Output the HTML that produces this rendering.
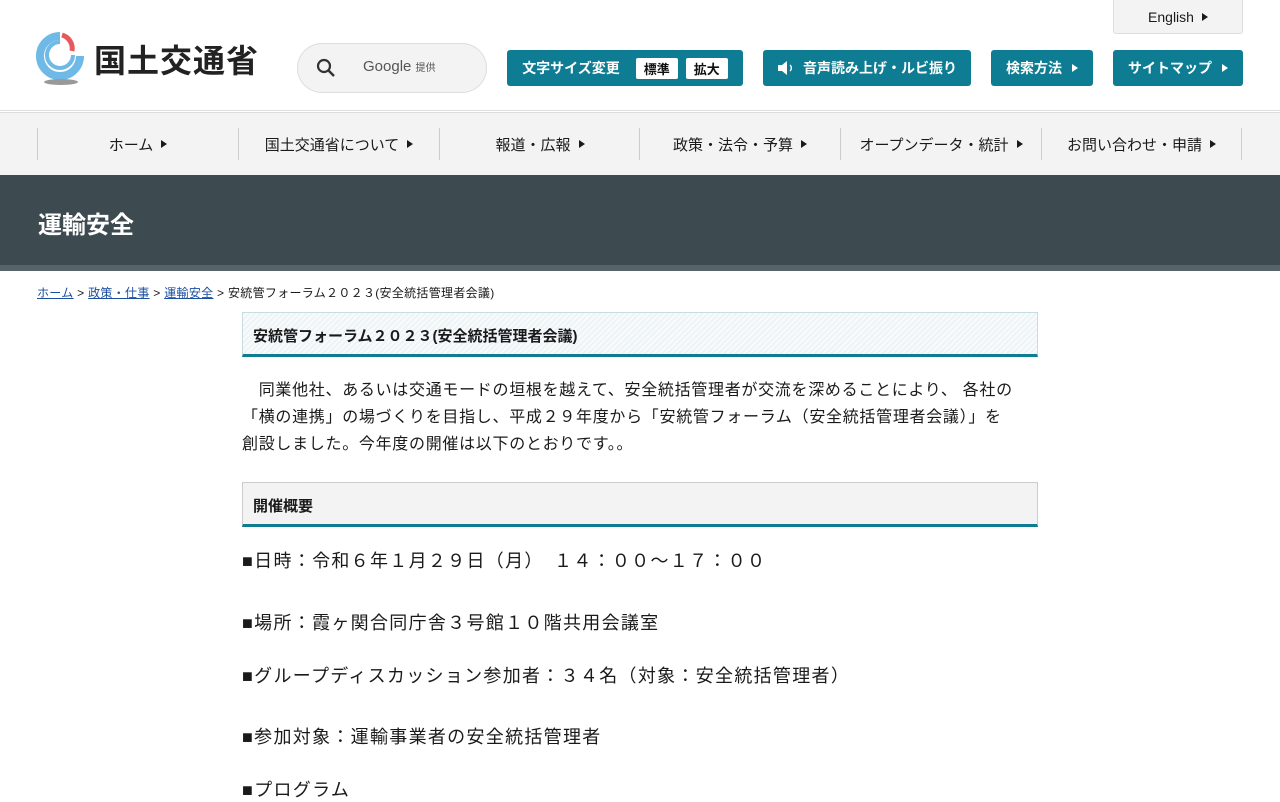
<!DOCTYPE html>
<html><head><meta charset="utf-8"><style>
*{margin:0;padding:0;box-sizing:border-box}
body{width:1280px;height:800px;overflow:hidden;background:#fff;font-family:"Liberation Sans","Noto Sans CJK JP",sans-serif;color:#1a1a1a}
.abs{position:absolute}
.btn{position:absolute;top:50px;height:36px;background:#0e7d93;color:#fff;border-radius:3px;font-size:14px;font-weight:bold;display:flex;align-items:center;justify-content:center}
.tri{display:inline-block;width:0;height:0;border-left:6px solid currentColor;border-top:4.5px solid transparent;border-bottom:4.5px solid transparent;margin-left:10px}
.wb{background:#fff;color:#111;border-radius:2px;padding:1px 8px;font-size:13px;margin-left:8px}
.nav{position:absolute;top:112px;left:0;width:1280px;height:63px;background:#f3f3f3;border-top:1px solid #ddd}
.nav div{position:absolute;top:15px;height:32px;width:201px;border-left:1px solid #ccc;font-size:15px;display:flex;align-items:center;justify-content:center}
.nav .tri{border-left-width:6px;margin-left:8px}
.h2{position:absolute;left:242px;width:796px;height:45px;border:1px solid #c8dde2;border-bottom:3px solid #0e7d93;background:repeating-linear-gradient(135deg,#eef4f6 0 2px,#f8fbfc 2px 4px);font-size:15px;font-weight:bold;padding:12px 10px}
.p{position:absolute;left:242px;font-size:18px;letter-spacing:1.3px}
</style></head><body>
<svg class="abs" style="left:36px;top:32px" width="50" height="54" viewBox="0 0 50 54">
<path d="M24 4 A20 20 0 1 0 44 24" fill="none" stroke="#6fb9e6" stroke-width="8"/>
<path d="M24 10 A13 13 0 1 0 37 23" fill="none" stroke="#6fb9e6" stroke-width="4"/>
<path d="M26 3 A14 14 0 0 1 36 19" fill="none" stroke="#e65a5f" stroke-width="5"/>
<ellipse cx="25" cy="50" rx="17" ry="3" fill="#999"/></svg>
<div class="abs" style="left:94px;top:36px;font-size:32px;font-weight:bold;color:#222;letter-spacing:1px">国土交通省</div>
<div class="abs" style="left:297px;top:43px;width:190px;height:50px;border:1px solid #ddd;border-radius:25px;background:#f3f3f3"></div>
<svg class="abs" style="left:316px;top:58px" width="20" height="20"><circle cx="8" cy="8" r="6" fill="none" stroke="#333" stroke-width="2.2"/><line x1="12.5" y1="12.5" x2="18" y2="18" stroke="#333" stroke-width="2.5"/></svg>
<div class="abs" style="left:363px;top:58px;font-size:15px;color:#555">Google <span style="font-size:10px">提供</span></div>
<div class="abs" style="left:1113px;top:0;width:130px;height:34px;background:#f3f3f3;border:1px solid #ddd;border-top:none;border-radius:0 0 3px 3px;font-size:14px;display:flex;align-items:center;justify-content:center">English<span class="tri" style="margin-left:8px"></span></div>
<div class="btn" style="left:507px;width:236px">文字サイズ変更<span class="wb" style="margin-left:16px">標準</span><span class="wb">拡大</span></div>
<div class="btn" style="left:763px;width:208px"><svg width="20" height="16" style="margin-right:6px" viewBox="0 0 20 16"><path d="M1 5h4l5-4v14l-5-4H1z" fill="#fff"/><path d="M13 5a4 4 0 0 1 0 6" fill="none" stroke="#fff" stroke-width="1.3"/></svg>音声読み上げ・ルビ振り</div>
<div class="btn" style="left:991px;width:102px">検索方法<span class="tri"></span></div>
<div class="btn" style="left:1113px;width:130px">サイトマップ<span class="tri"></span></div>
<div class="abs" style="left:0;top:110px;width:1280px;height:1px;background:#ddd"></div>
<div class="nav">
<div style="left:37px">ホーム<span class="tri"></span></div>
<div style="left:238px">国土交通省について<span class="tri"></span></div>
<div style="left:439px">報道・広報<span class="tri"></span></div>
<div style="left:639px">政策・法令・予算<span class="tri"></span></div>
<div style="left:840px">オープンデータ・統計<span class="tri"></span></div>
<div style="left:1041px;border-right:1px solid #ccc">お問い合わせ・申請<span class="tri"></span></div>
</div>
<div class="abs" style="left:0;top:175px;width:1280px;height:90px;background:#3d4a50"></div>
<div class="abs" style="left:0;top:265px;width:1280px;height:6px;background:#56646a"></div>
<div class="abs" style="left:38px;top:205px;font-size:24px;font-weight:bold;color:#fff">運輸安全</div>
<div class="abs" style="left:37px;top:284px;font-size:12px;letter-spacing:0.3px"><u style="color:#1a4fa0">ホーム</u> &gt; <u style="color:#1a4fa0">政策・仕事</u> &gt; <u style="color:#1a4fa0">運輸安全</u> &gt; 安統管フォーラム２０２３(安全統括管理者会議)</div>
<div class="h2" style="top:312px">安統管フォーラム２０２３(安全統括管理者会議)</div>
<div class="abs" style="left:242px;top:377px;width:774px;font-size:16px;line-height:27px;letter-spacing:0.7px">　同業他社、あるいは交通モードの垣根を越えて、安全統括管理者が交流を深めることにより、 各社の「横の連携」の場づくりを目指し、平成２９年度から「安統管フォーラム（安全統括管理者会議）」を創設しました。今年度の開催は以下のとおりです。。</div>
<div class="h2" style="top:482px;background:#f3f3f3;border-color:#ccc;border-bottom-color:#0e7d93">開催概要</div>
<div class="p" style="top:547px">■日時：令和６年１月２９日（月）　１４：００～１７：００</div>
<div class="p" style="top:609px">■場所：霞ヶ関合同庁舎３号館１０階共用会議室</div>
<div class="p" style="top:662px">■グループディスカッション参加者：３４名（対象：安全統括管理者）</div>
<div class="p" style="top:723px">■参加対象：運輸事業者の安全統括管理者</div>
<div class="p" style="top:776px">■プログラム</div>
</body></html>
